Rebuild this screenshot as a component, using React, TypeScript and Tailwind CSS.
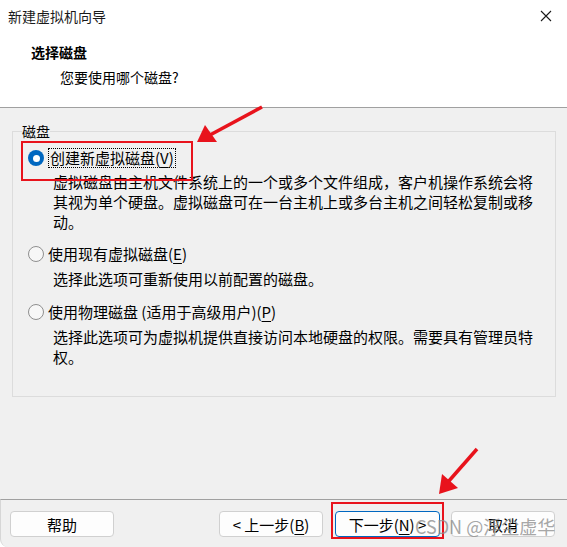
import React from 'react';

const font = "font-['Noto_Sans_CJK_SC','Noto_Sans',sans-serif]";

function Radio({ checked }: { checked?: boolean }) {
  if (checked) {
    return (
      <span className="flex h-[16px] w-[16px] shrink-0 items-center justify-center rounded-full bg-[#0067c0]">
        <span className="h-[7px] w-[7px] rounded-full bg-white" />
      </span>
    );
  }
  return <span className="h-[16px] w-[16px] shrink-0 rounded-full border border-[#8f8f8f] bg-[#f7f7f7]" />;
}

function Key({ k }: { k: string }) {
  return <span className="underline underline-offset-[3px] decoration-1">{k}</span>;
}

function Option({
  checked,
  label,
  lines,
  gapTop,
  descGap,
}: {
  checked?: boolean;
  label: React.ReactNode;
  lines: string[];
  gapTop: string;
  descGap: string;
}) {
  return (
    <div className={gapTop}>
      <div className="flex h-[20px] items-center gap-[4px]">
        <Radio checked={checked} />
        {label}
      </div>
      <div className={`${descGap} pl-[25px] text-[15px] leading-[20px]`}>
        {lines.map((l, i) => (
          <div key={i} className="whitespace-nowrap">{l}</div>
        ))}
      </div>
    </div>
  );
}

function Button({ children, primary, w }: { children: React.ReactNode; primary?: boolean; w: string }) {
  return (
    <div
      className={`flex h-[26px] ${w} items-center justify-center rounded-[4px] border bg-[#fdfdfd] text-[15px] leading-none ${
        primary ? 'border-[#0067c0]' : 'border-[#d0d0d0]'
      }`}
    >
      {children}
    </div>
  );
}

export default function App() {
  return (
    <div className={`relative h-[547px] w-[567px] overflow-hidden bg-white text-black ${font}`}>
      <div className="flex h-[547px] flex-col bg-white">
        {/* title bar */}
        <div className="flex h-[31px] items-center justify-between pl-[8px] pr-[15px]">
          <span className="text-[14px] leading-none text-[#1a1a1a]">新建虚拟机向导</span>
          <svg width="12" height="12" viewBox="0 0 12 12">
            <path d="M1 1 L11 11 M11 1 L1 11" stroke="#1a1a1a" strokeWidth="1.1" />
          </svg>
        </div>

        {/* header */}
        <div className="h-[76px] pl-[31px] pt-[11px]">
          <div className="text-[14px] font-bold leading-[20px]">选择磁盘</div>
          <div className="mt-[5px] pl-[29px] text-[14px] leading-[20px]">您要使用哪个磁盘?</div>
        </div>

        {/* body */}
        <div className="h-[392px] border-t border-[#a0a0a0] bg-[#f0f0f0] pl-[12px] pr-[11px] pt-[13px]">
          <fieldset className="h-[276px] border border-[#dcdcdc] pl-[9px] pt-[7px]">
            <legend className="text-[14px] leading-[20px]">磁盘</legend>
            <div className="pl-[6px]">
              <Option
                checked
                gapTop=""
                descGap="mt-[4px]"
                label={
                  <span className="border border-dotted border-black px-[1px] text-[15px] leading-[18px]">
                    创建新虚拟磁盘(<Key k="V" />)
                  </span>
                }
                lines={[
                  '虚拟磁盘由主机文件系统上的一个或多个文件组成，客户机操作系统会将',
                  '其视为单个硬盘。虚拟磁盘可在一台主机上或多台主机之间轻松复制或移',
                  '动。',
                ]}
              />
              <Option
                gapTop="mt-[12px]"
                descGap="mt-[5px]"
                label={
                  <span className="text-[15px] leading-[20px]">
                    使用现有虚拟磁盘(<Key k="E" />)
                  </span>
                }
                lines={['选择此选项可重新使用以前配置的磁盘。']}
              />
              <Option
                gapTop="mt-[13px]"
                descGap="mt-[5px]"
                label={
                  <span className="text-[15px] leading-[20px]">
                    使用物理磁盘 (适用于高级用户)(<Key k="P" />)
                  </span>
                }
                lines={['选择此选项可为虚拟机提供直接访问本地硬盘的权限。需要具有管理员特', '权。']}
              />
            </div>
          </fieldset>
        </div>

        {/* footer */}
        <div className="flex flex-1 items-start justify-between rounded-bl-[8px] border-t border-l border-[#a0a0a0] border-l-[#d6d6d6] bg-[#f0f0f0] pl-[9px] pr-[12px] pt-[11px]">
          <Button w="w-[104px]">帮助</Button>
          <div className="flex gap-[12px]">
            <Button w="w-[104px]">
              &lt; 上一步(<Key k="B" />)
            </Button>
            <div className="flex gap-[11px]">
              <Button w="w-[105px]" primary>
                下一步(<Key k="N" />) &gt;
              </Button>
              <Button w="w-[104px]">取消</Button>
            </div>
          </div>
        </div>
      </div>

      {/* annotations */}
      <div className="pointer-events-none absolute left-[21px] top-[141px] h-[40px] w-[172px] border-2 border-[#e8131c]" />
      <div className="pointer-events-none absolute left-[331px] top-[502px] h-[37px] w-[113px] border-2 border-[#e8131c]" />
      <svg className="pointer-events-none absolute left-0 top-0" width="567" height="547">
        <line x1="262" y1="107" x2="210" y2="135" stroke="#e8131c" strokeWidth="3.5" />
        <polygon points="197,142 205,125 217,142" fill="#e8131c" />
        <line x1="477" y1="449" x2="448" y2="482" stroke="#e8131c" strokeWidth="3.5" />
        <polygon points="439,494 442,474 458,488" fill="#e8131c" />
      </svg>
      <div className="pointer-events-none absolute left-[415px] top-[514px] text-[18px] leading-[24px] text-[#8f8f8f]/80">
        CSDN @浮尘虚华
      </div>
    </div>
  );
}
